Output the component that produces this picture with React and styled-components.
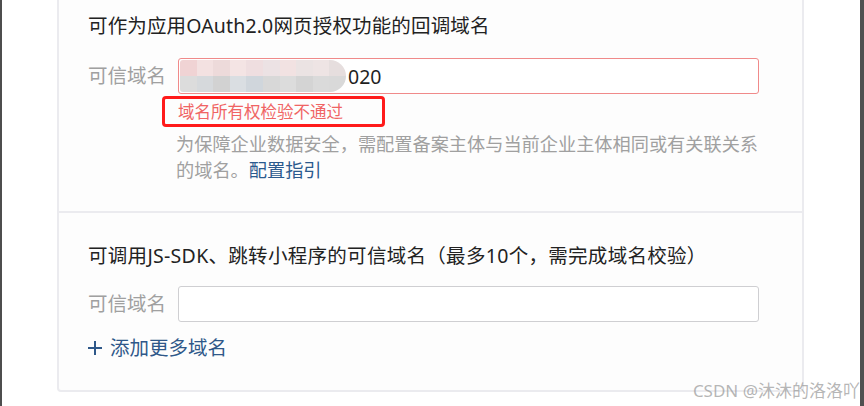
import styled, { createGlobalStyle } from "styled-components";

const GlobalStyle = createGlobalStyle`
  html, body {
    margin: 0;
    padding: 0;
    background: #ffffff;
  }
  body {
    font-family: "Noto Sans", "Noto Sans CJK SC", sans-serif;
  }
`;

const mosaicTop = [
  "#f0d3d4", "#f3e1e1", "#eddada", "#f4e4e4", "#efdee0",
  "#ece2e4", "#f2e2e2", "#ebe3e3", "#eee4e4", "#e6dede",
];
const mosaicBottom = [
  "#dcdcdc", "#d6d9dc", "#d2d2d2", "#dadee2", "#d0d6dc",
  "#d8d8d8", "#dcdcdc", "#d4d4d4", "#dadada", "#d9d9d9",
];

const App = () => {
  return (
    <>
      <GlobalStyle />
      <Screen>
        <Card>
          <Section $top={13} $bottom={28}>
            <Title>可作为应用OAuth2.0网页授权功能的回调域名</Title>
            <FieldRow $gap={19}>
              <Label>可信域名</Label>
              <Input $error>
                <Mosaic>
                  {mosaicTop.concat(mosaicBottom).map((c, i) => (
                    <Tile key={i} $color={c} />
                  ))}
                </Mosaic>
                <Value>020</Value>
              </Input>
            </FieldRow>
            <ErrorBox>域名所有权检验不通过</ErrorBox>
            <Help>
              <HelpLine>为保障企业数据安全，需配置备案主体与当前企业主体相同或有关联关系</HelpLine>
              <HelpLine>
                的域名。<HelpLink>配置指引</HelpLink>
              </HelpLine>
            </Help>
          </Section>
          <Section $top={30} $bottom={29}>
            <Title $spread>
              可调用JS-SDK、跳转小程序的可信域名（最多10个，需完成域名校验）
            </Title>
            <FieldRow $gap={17}>
              <Label>可信域名</Label>
              <Input />
            </FieldRow>
            <AddMore>
              <svg width="14" height="14" viewBox="0 0 14 14">
                <path d="M7 0v14M0 7h14" stroke="#2f5889" strokeWidth="2" />
              </svg>
              添加更多域名
            </AddMore>
          </Section>
        </Card>
        <Watermark>CSDN @沐沐的洛洛吖</Watermark>
      </Screen>
    </>
  );
};

// Styles

const Screen = styled.div`
  position: relative;
  box-sizing: border-box;
  width: 864px;
  height: 406px;
  overflow: hidden;
  display: flex;
  align-items: flex-start;
  border-left: 2px solid #4e4e4e;
  border-right: 4px solid #505050;
  background: #ffffff;
`;

const Card = styled.div`
  box-sizing: border-box;
  width: 747px;
  margin-left: 55px;
  background: #fdfdfd;
  border: 2px solid #ebebef;
  border-top: none;
  border-radius: 0 0 4px 4px;
`;

const Section = styled.div`
  padding: ${(p) => p.$top}px 42px ${(p) => p.$bottom}px 29px;

  & + & {
    border-top: 2px solid #ebebef;
  }
`;

const Title = styled.div`
  font-size: 19.5px;
  line-height: 26px;
  letter-spacing: ${(p) => (p.$spread ? "0.3px" : "0.15px")};
  color: #222222;
  white-space: nowrap;
`;

const FieldRow = styled.div`
  display: flex;
  align-items: center;
  margin-top: ${(p) => p.$gap}px;
`;

const Label = styled.div`
  width: 90px;
  flex-shrink: 0;
  font-size: 19.5px;
  line-height: 26px;
  color: #a0a0a0;
  white-space: nowrap;
`;

const Input = styled.div`
  box-sizing: border-box;
  width: 581px;
  height: 36px;
  display: flex;
  align-items: center;
  padding-left: 1px;
  background: #ffffff;
  border: 1px solid ${(p) => (p.$error ? "#f08a8a" : "#cfcfd2")};
  border-radius: 3px;
`;

const Mosaic = styled.div`
  width: 166px;
  height: 32px;
  display: grid;
  grid-template-columns: repeat(10, 1fr);
  grid-template-rows: repeat(2, 1fr);
  border-radius: 3px 16px 16px 3px;
  overflow: hidden;
  filter: blur(0.4px);
`;

const Tile = styled.div`
  background: ${(p) => p.$color};
`;

const Value = styled.span`
  margin-left: 2px;
  font-size: 19.5px;
  color: #1f1f1f;
`;

const ErrorBox = styled.div`
  box-sizing: border-box;
  width: 223px;
  height: 31px;
  margin: 2px 0 0 74px;
  padding-left: 13px;
  border: 3px solid #ff1a1a;
  border-radius: 4px;
  font-size: 16.5px;
  line-height: 25px;
  color: #f06464;
  white-space: nowrap;
`;

const Help = styled.div`
  margin: 4px 0 0 88px;
  font-size: 18.2px;
  line-height: 26px;
  color: #a0a0a0;
`;

const HelpLine = styled.div`
  white-space: nowrap;
`;

const HelpLink = styled.span`
  color: #2b5a8e;
`;

const AddMore = styled.div`
  display: flex;
  align-items: center;
  gap: 8px;
  margin-top: 13px;
  font-size: 19.5px;
  line-height: 26px;
  color: #2f5889;
`;

const Watermark = styled.div`
  position: absolute;
  right: 0;
  bottom: 5px;
  font-size: 17px;
  line-height: 20px;
  color: rgba(150, 150, 150, 0.7);
  white-space: nowrap;
`;

export default App;
